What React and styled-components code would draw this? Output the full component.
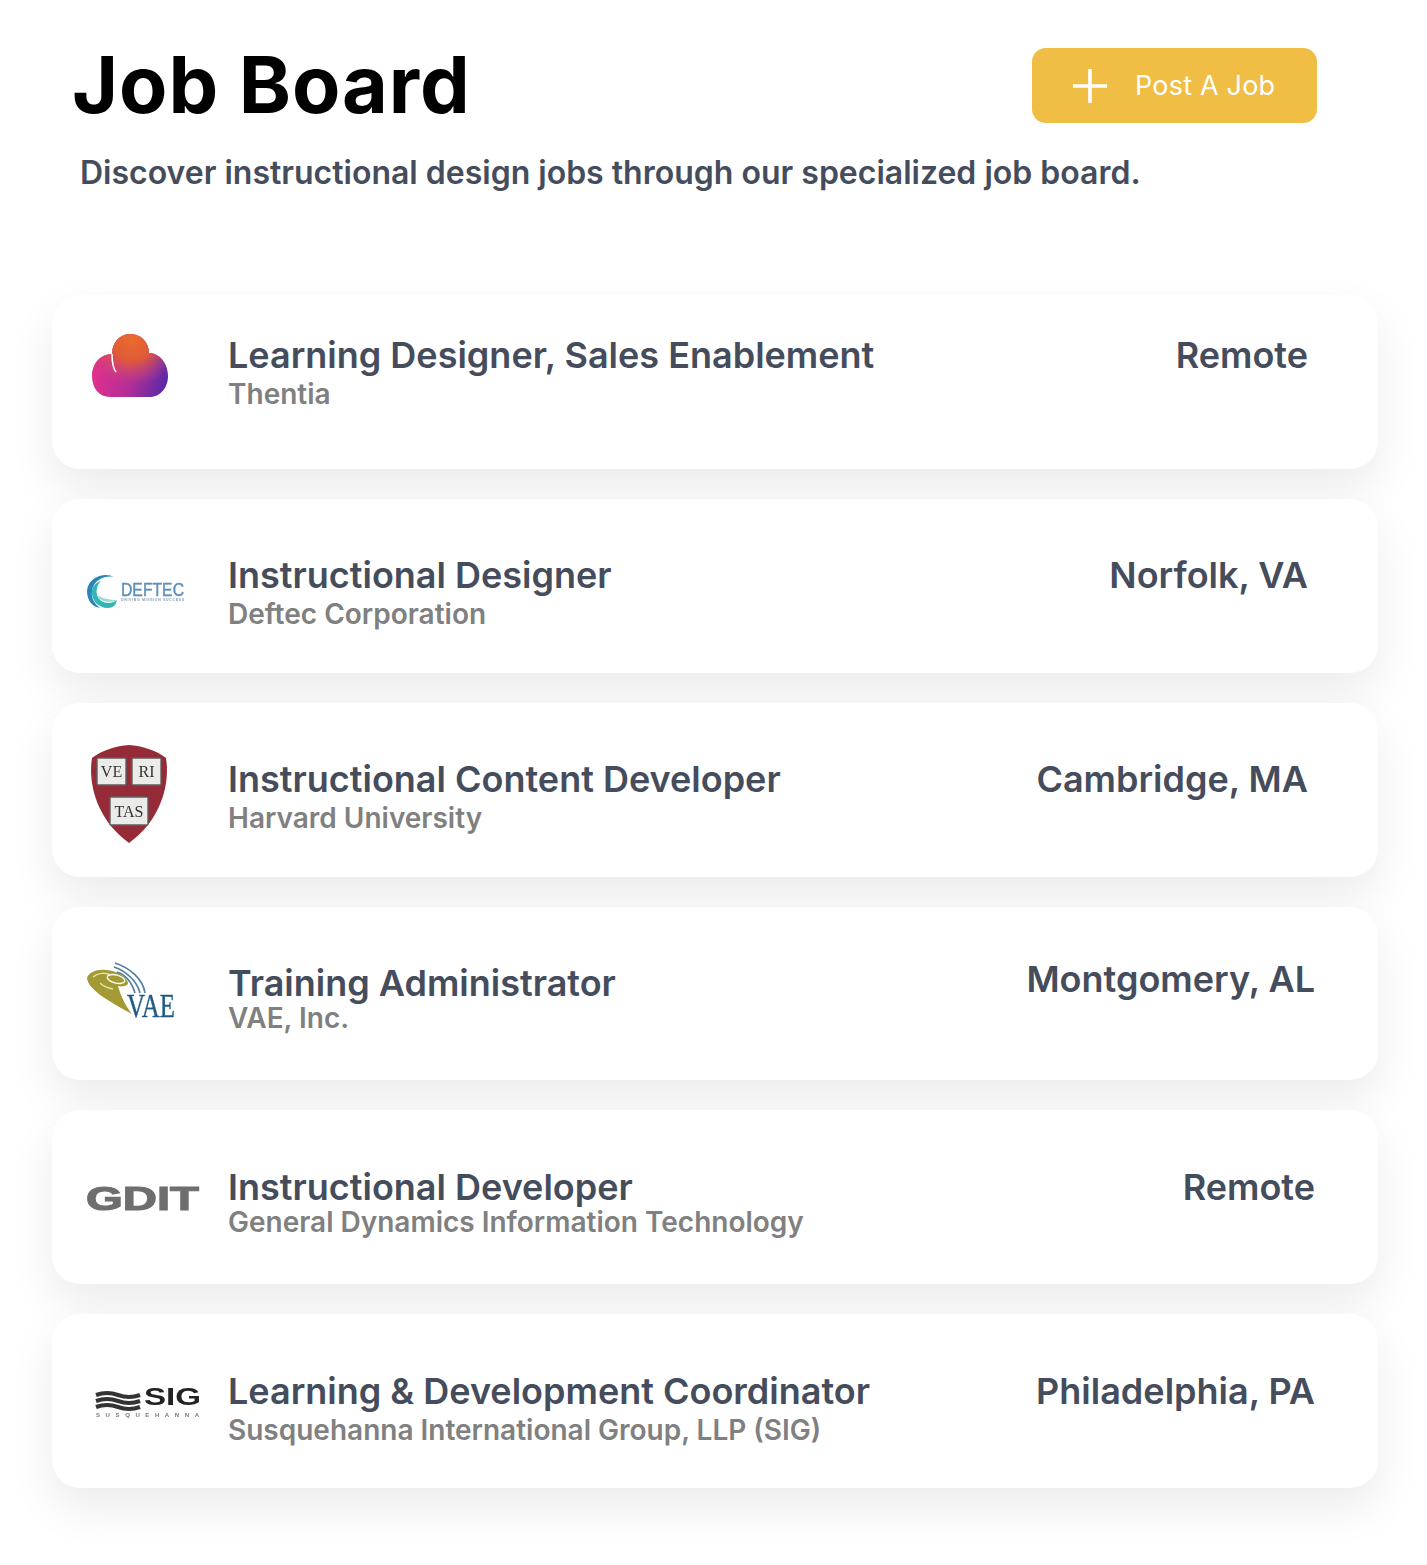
import React from 'react';
import styled, { createGlobalStyle } from 'styled-components';

const GlobalStyle = createGlobalStyle`
  html, body {
    margin: 0;
    padding: 0;
    background: #fff;
    font-family: Inter, "Liberation Sans", sans-serif;
  }
`;

const Page = styled.div`
  width: 1427px;
  height: 1565px;
  overflow: hidden;
  box-sizing: border-box;
  padding: 48px 49px 0 52px;
`;

const Header = styled.header`
  display: flex;
  justify-content: space-between;
  align-items: flex-start;
  padding: 0 61px 0 20px;
`;

const Title = styled.h1`
  margin: 0;
  height: 75px;
  font-family: Inter, sans-serif;
  font-size: 79px;
  line-height: 73px;
  font-weight: 700;
  letter-spacing: 0.9px;
  color: #000;
`;

const PostButton = styled.button`
  display: flex;
  align-items: center;
  gap: 28px;
  width: 285px;
  height: 75px;
  box-sizing: border-box;
  padding: 0 0 0 41px;
  border: 0;
  border-radius: 14px;
  background: #f0bd45;
  color: #fff;
  font-family: Inter, sans-serif;
  font-size: 27px;
  letter-spacing: 0.2px;
`;

const Subtitle = styled.p`
  margin: 26px 0 0 28px;
  font-size: 32px;
  line-height: 48px;
  font-weight: 600;
  color: #454c5c;
`;

const List = styled.div`
  display: flex;
  flex-direction: column;
  gap: 30px;
  margin-top: 98px;
`;

const Card = styled.article`
  display: flex;
  align-items: center;
  height: ${(p) => p.$height || 174}px;
  padding-left: 28px;
  border-radius: 28px;
  background: #fff;
  box-shadow: 0 20px 45px rgba(0, 0, 0, 0.08);
`;

const LogoSlot = styled.div`
  flex: none;
  width: 148px;
  height: 110px;
`;

const Row = styled.div`
  flex: 1;
  align-self: stretch;
  display: flex;
  align-items: flex-start;
  justify-content: space-between;
  min-width: 0;
  padding-top: ${(p) => p.$top}px;
`;

const JobTitle = styled.h2`
  margin: 0;
  font-size: 36px;
  line-height: 36px;
  font-weight: 600;
  color: #454c5c;
`;

const Company = styled.p`
  margin: ${(p) => (p.$tight ? 1 : 5)}px 0 0;
  font-size: 28px;
  line-height: 32px;
  font-weight: 600;
  color: #808080;
`;

const Location = styled.div`
  flex: none;
  margin: ${(p) => (p.$raised ? -4 : 0)}px ${(p) => (p.$flush ? 63 : 70)}px 0 0;
  font-size: 36px;
  line-height: 36px;
  font-weight: 600;
  color: #454c5c;
`;

const Logo = styled.svg.attrs({ width: 120, height: 110, viewBox: '0 0 120 110' })`
  display: block;
  overflow: visible;
  filter: blur(${(p) => p.$blur || 0.4}px);
`;

const PlusIcon = () => (
  <svg width="34" height="34" viewBox="0 0 34 34">
    <path d="M17 0V34M0 17H34" stroke="#fff" strokeWidth="3.6" fill="none" />
  </svg>
);

const cloud = 'M20 64C9 64 2 55 2 43C2 31 10 21 22 21C22 9 30 1 40 1C51 1 59 9 59 20C70 20 78 31 78 43C78 55 70 64 60 64Z';

const ThentiaLogo = () => (
  <Logo>
    <defs>
      <linearGradient id="thentia" x1="0" y1="0.6" x2="1" y2="0.8">
        <stop offset="0" stopColor="#e4308a" />
        <stop offset="0.5" stopColor="#b52c98" />
        <stop offset="1" stopColor="#552aa8" />
      </linearGradient>
      <radialGradient id="thentiaTop" gradientUnits="userSpaceOnUse" cx="42" cy="6" r="48">
        <stop offset="0" stopColor="#ea6c2c" />
        <stop offset="0.45" stopColor="#e05a38" />
        <stop offset="1" stopColor="#c8408a" stopOpacity="0" />
      </radialGradient>
    </defs>
    <g transform="translate(10 6)">
      <path d={cloud} fill="url(#thentia)" />
      <path d={cloud} fill="url(#thentiaTop)" />
      <path d="M22 21C22 30 23 35 26 39" fill="none" stroke="#fff" strokeWidth="1.6" />
    </g>
  </Logo>
);

const DeftecLogo = () => (
  <Logo>
    <g transform="translate(6 39)">
      <path d="M28 7C20 2 2 6 1 21C1 30 6 37 14 38C8 33 5 28 6 21C7 11 18 5 28 7Z" fill="#2a86b8" />
      <path d="M6 21C5 30 12 38 22 38C27 38 30 35 31 30C25 35 14 34 11 25C10 20 11 15 15 11C9 13 6 17 6 21Z" fill="#33b5b5" />
      <path d="M11 25C13 31 23 34 31 30C24 30 15 28 11 25Z" fill="#9ad9d2" />
      <text x="35" y="26" fontFamily="Liberation Sans, sans-serif" fontSize="19" fill="#5b8fb8" stroke="#5b8fb8" strokeWidth="0.4" textLength="63" lengthAdjust="spacingAndGlyphs">DEFTEC</text>
      <text x="35" y="31" fontFamily="Liberation Sans, sans-serif" fontWeight="700" fontSize="3.5" fill="#8a99a6" textLength="63">DRIVING MISSION SUCCESS</text>
    </g>
  </Logo>
);

const Book = ({ x, y, w, h, label }) => (
  <g transform={`translate(${x} ${y})`}>
    <rect width={w} height={h} rx="1" fill="#ebebe9" stroke="#5f5f5f" strokeWidth="1.4" />
    <text x={w / 2} y={h - 8} textAnchor="middle" fontFamily="Liberation Serif, serif" fontSize="16" fill="#333">{label}</text>
  </g>
);

const HarvardLogo = () => (
  <Logo $blur={0.3}>
    <g transform="translate(10 10)">
      <path d="M39 0C52 1 66 5 76 13C80 38 72 74 39 98C6 74 -2 38 2 13C12 5 26 1 39 0Z" fill="#952b36" />
      <Book x={7} y={13} w={29} h={27} label="VE" />
      <Book x={42} y={13} w={29} h={27} label="RI" />
      <Book x={20} y={52} w={38} h={28} label="TAS" />
    </g>
  </Logo>
);

const VaeLogo = () => (
  <Logo>
    <path d="M7 39C9 33 17 30 26 31C38 32 47 38 48 44C48 47 42 48 38 47C40 55 46 68 52 75C36 66 8 52 7 39Z" fill="#a39a34" />
    <path d="M13 38C17 34 25 33 31 36M20 44C23 47 28 49 33 50" fill="none" stroke="#e3dfa8" strokeWidth="1.4" />
    <ellipse cx="36" cy="40" rx="9" ry="4" fill="#a39a34" stroke="#fff" strokeWidth="1.4" transform="rotate(14 36 40)" />
    <path d="M35 24C50 29 63 40 65 54M34 28C46 32 57 42 60 54M37 33C46 36 52 44 55 54" fill="none" stroke="#4f7e9f" strokeWidth="1.7" />
    <text x="47" y="78" fontFamily="Liberation Serif, serif" fontSize="33" fill="#1f5a85" stroke="#1f5a85" strokeWidth="0.4" textLength="48" lengthAdjust="spacingAndGlyphs">VAE</text>
  </Logo>
);

const GditLogo = () => (
  <Logo $blur={0.6}>
    <text x="6" y="68" fontFamily="Liberation Sans, sans-serif" fontWeight="700" fontSize="34" fill="#6e6e6e" stroke="#6e6e6e" strokeWidth="1.2" textLength="113" lengthAdjust="spacingAndGlyphs">GDIT</text>
  </Logo>
);

const SigLogo = () => (
  <Logo>
    <path d="M16 49Q27 45 38 49T60 49M16 55Q27 51 38 55T60 55M16 61Q27 57 38 61T60 61" fill="none" stroke="#333" strokeWidth="4" />
    <text x="64" y="59" fontFamily="Liberation Sans, sans-serif" fontWeight="700" fontSize="24" fill="#222" textLength="57" lengthAdjust="spacingAndGlyphs">SIG</text>
    <text x="16" y="71" fontFamily="Liberation Sans, sans-serif" fontWeight="700" fontSize="6" fill="#777" textLength="103">SUSQUEHANNA</text>
  </Logo>
);

const jobs = [
  { title: 'Learning Designer, Sales Enablement', company: 'Thentia', location: 'Remote', Mark: ThentiaLogo, top: 42 },
  { title: 'Instructional Designer', company: 'Deftec Corporation', location: 'Norfolk, VA', Mark: DeftecLogo, top: 58 },
  { title: 'Instructional Content Developer', company: 'Harvard University', location: 'Cambridge, MA', Mark: HarvardLogo, top: 58 },
  { title: 'Training Administrator', company: 'VAE, Inc.', location: 'Montgomery, AL', Mark: VaeLogo, top: 58, height: 173, tight: true, flush: true, raised: true },
  { title: 'Instructional Developer', company: 'General Dynamics Information Technology', location: 'Remote', Mark: GditLogo, top: 59, tight: true, flush: true },
  { title: 'Learning & Development Coordinator', company: 'Susquehanna International Group, LLP (SIG)', location: 'Philadelphia, PA', Mark: SigLogo, top: 59, flush: true },
];

export default function App() {
  return (
    <Page>
      <GlobalStyle />
      <Header>
        <Title>Job Board</Title>
        <PostButton>
          <PlusIcon />
          Post A Job
        </PostButton>
      </Header>
      <Subtitle>Discover instructional design jobs through our specialized job board.</Subtitle>
      <List>
        {jobs.map(({ Mark, ...job }) => (
          <Card key={job.title} $height={job.height}>
            <LogoSlot>
              <Mark />
            </LogoSlot>
            <Row $top={job.top}>
              <div>
                <JobTitle>{job.title}</JobTitle>
                <Company $tight={job.tight}>{job.company}</Company>
              </div>
              <Location $flush={job.flush} $raised={job.raised}>{job.location}</Location>
            </Row>
          </Card>
        ))}
      </List>
    </Page>
  );
}
